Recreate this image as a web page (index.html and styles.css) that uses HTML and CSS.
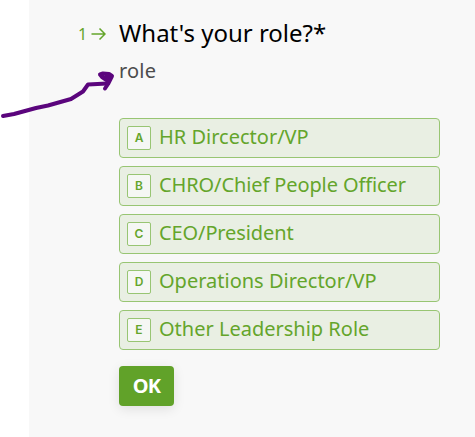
FILE: index.html
```html
<!DOCTYPE html>
<html lang="en">
  <head>
    <meta charset="UTF-8" />
    <meta name="viewport" content="width=device-width, initial-scale=1.0" />
    <title>What's your role?</title>
    <link rel="stylesheet" href="styles.css">
  </head>
  <body>
    <form class="form-container">
      <div class="number">
        <span>1</span>
        <svg class="number-arrow" width="15" height="12" viewBox="0 0 15 12">
          <path d="M0.5 6H14M8.500 0.5L14 6L8.500 11.500" />
        </svg>
      </div>
      <div class="question">
        <h2>What's your role?*</h2>
        <p class="description">role</p>

        <div class="options">
          <button type="button" class="option"><span class="key">A</span><span class="label">HR Dircector/VP</span></button>
          <button type="button" class="option"><span class="key">B</span><span class="label label-tight">CHRO/Chief People Officer</span></button>
          <button type="button" class="option"><span class="key">C</span><span class="label label-tight">CEO/President</span></button>
          <button type="button" class="option"><span class="key">D</span><span class="label">Operations Director/VP</span></button>
          <button type="button" class="option"><span class="key">E</span><span class="label">Other Leadership Role</span></button>
        </div>

        <button type="submit" class="ok">OK</button>
      </div>
    </form>

    <svg class="pointer" width="120" height="60" viewBox="0 0 120 60">
      <path d="M3 56L14 54L36 48L48 45.500L71 39L83 31.500L88 24.500L107 23.500" />
      <path d="M105 28.500L108 24L112 16L109 14L103 13.500L100 14.500L102 17L108 21L106 17L110 17" />
    </svg>
  </body>
</html>
```

FILE: styles.css
```css
* {
  box-sizing: border-box;
}
body {
  position: relative;
  margin: 0;
  height: 437px;
  overflow: hidden;
  background-color: #fff;
  font-family: "Noto Sans", sans-serif;
}
.form-container {
  display: flex;
  height: 437px;
  margin-left: 29px;
  padding: 17px 35px 0 49px;
  background-color: #f8f8f8;
}
.number {
  display: flex;
  align-items: center;
  width: 41px;
  height: 33px;
  gap: 4px;
  color: #64a52b;
  font-size: 16px;
}
.number-arrow {
  fill: none;
  stroke: #64a52b;
  stroke-width: 1.5;
}
.question {
  width: 321px;
}
h2 {
  margin: 0;
  color: #000;
  font-size: 24px;
  font-weight: 400;
  line-height: 32px;
  white-space: nowrap;
}
.description {
  margin: 8px 0 0;
  color: #4c4c4c;
  font-size: 20px;
  letter-spacing: 0.2px;
  line-height: 28px;
}
.options {
  display: flex;
  flex-direction: column;
  gap: 8px;
  margin-top: 33px;
}
.option {
  display: flex;
  align-items: center;
  gap: 8px;
  width: 321px;
  height: 40px;
  padding: 0 7px;
  border: 1px solid #98c573;
  border-radius: 4px;
  background-color: #e9efe3;
  color: #64a52b;
  font-family: inherit;
  font-size: 20px;
  line-height: 28px;
  text-align: left;
  cursor: pointer;
}
.key {
  width: 24px;
  height: 24px;
  border: 1px solid #98c573;
  border-radius: 2px;
  background-color: #f5f7f4;
  font-family: Inter, sans-serif;
  font-size: 12px;
  font-weight: 600;
  line-height: 22px;
  text-align: center;
}
.label {
  position: relative;
  top: -1px;
  white-space: nowrap;
}
.label-tight {
  letter-spacing: -0.11px;
}
.ok {
  display: block;
  width: 55px;
  height: 40px;
  margin-top: 16px;
  padding: 0 0 2px;
  border: none;
  border-radius: 4px;
  background-color: #61a229;
  box-shadow: 0 3px 12px rgba(0, 0, 0, 0.1);
  color: #fff;
  font-family: inherit;
  font-size: 20px;
  font-weight: 700;
  letter-spacing: -0.8px;
  cursor: pointer;
}
.pointer {
  position: absolute;
  top: 60px;
  left: 0;
  fill: none;
  stroke: #5b057d;
  stroke-width: 4;
  stroke-linecap: round;
  stroke-linejoin: round;
}
```
